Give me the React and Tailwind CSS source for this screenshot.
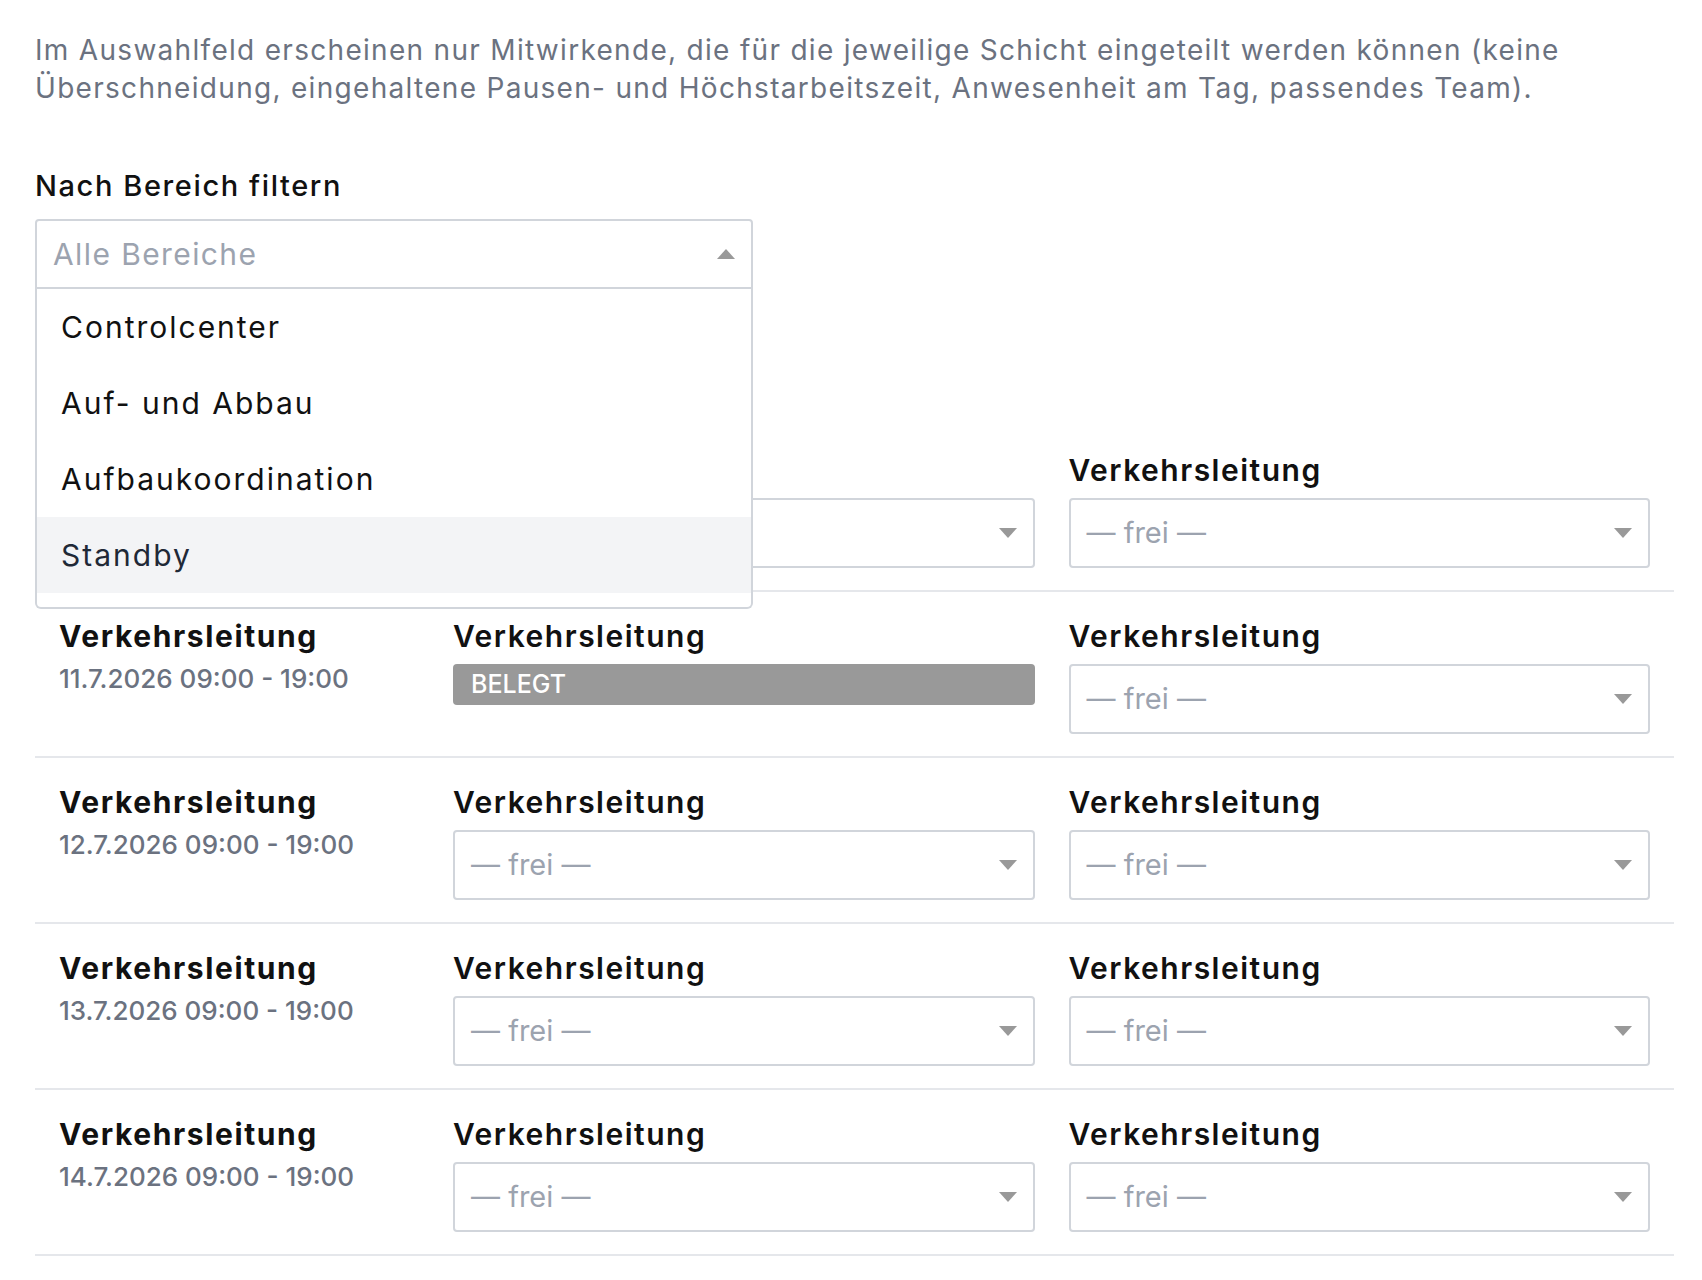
import React from "react";

const rows = [
  { date: "10.7.2026 09:00 - 19:00", a: "frei", b: "frei" },
  { date: "11.7.2026 09:00 - 19:00", a: "belegt", b: "frei" },
  { date: "12.7.2026 09:00 - 19:00", a: "frei", b: "frei" },
  { date: "13.7.2026 09:00 - 19:00", a: "frei", b: "frei" },
  { date: "14.7.2026 09:00 - 19:00", a: "frei", b: "frei" },
];

const options = ["Controlcenter", "Auf- und Abbau", "Aufbaukoordination", "Standby"];

function Caret({ up }) {
  return (
    <svg width="18" height="10" viewBox="0 0 18 10" className="shrink-0">
      <polygon points={up ? "9,0 18,10 0,10" : "0,0 18,0 9,10"} fill="#999999" />
    </svg>
  );
}

function Slot({ value }) {
  if (value === "belegt") {
    return (
      <div className="h-[41px] rounded-[4px] bg-[#999999] px-[18px] flex items-center text-white text-[25px] font-medium">
        BELEGT
      </div>
    );
  }
  return (
    <div className="h-[70px] rounded-[4px] border-2 border-[#d1d5db] bg-white px-4 flex items-center justify-between">
      <span className="text-[#9ca3af] text-[29px]">— frei —</span>
      <Caret />
    </div>
  );
}

export default function App() {
  return (
    <div className="min-h-screen bg-white pl-[35px] pr-[28px] pt-[31px] font-['Inter',sans-serif]">
      <p className="text-[#6b7280] text-[28px] leading-[38px] tracking-[1.3px]">
        Im Auswahlfeld erscheinen nur Mitwirkende, die für die jeweilige Schicht eingeteilt werden können (keine Überschneidung, eingehaltene Pausen- und Höchstarbeitszeit, Anwesenheit am Tag, passendes Team).
      </p>

      <div className="relative mt-[59px] w-[718px]">
        <div className="text-[#111111] text-[29px] leading-[40px] font-medium tracking-[1.6px] mb-[13px]">Nach Bereich filtern</div>
        <div className="h-[70px] rounded-t-[4px] border-2 border-[#d1d5db] bg-white pl-4 pr-[16px] flex items-center justify-between">
          <span className="text-[#9ca3af] text-[30px] tracking-[1.4px]">Alle Bereiche</span>
          <Caret up />
        </div>
        <div className="absolute left-0 right-0 top-full z-10 rounded-b-[6px] border-2 border-t-0 border-[#d1d5db] bg-white pb-[14px]">
          {options.map((o, i) => (
            <div
              key={o}
              className={"h-[76px] px-[24px] flex items-center text-[30px] tracking-[2px] " + (i === 3 ? "bg-[#f3f4f6] text-[#1f2937]" : "text-[#111111]")}
            >
              {o}
            </div>
          ))}
        </div>
      </div>

      <div className="mt-[137px]">
        {rows.map((r) => (
          <div key={r.date} className="grid grid-cols-[360px_1fr_1fr] gap-x-[34px] px-[24px] pt-[24px] pb-[22px] border-b-2 border-[#e5e7eb]">
            <div>
              <div className="text-[#111111] text-[30px] leading-[40px] font-bold tracking-[1.6px]">Verkehrsleitung</div>
              <div className="mt-[3px] text-[#6b7280] text-[26px] leading-[40px] font-medium">{r.date}</div>
            </div>
            <div>
              <div className="text-[#111111] text-[30px] leading-[40px] font-semibold tracking-[1.5px] mb-[8px]">Verkehrsleitung</div>
              <Slot value={r.a} />
            </div>
            <div>
              <div className="text-[#111111] text-[30px] leading-[40px] font-semibold tracking-[1.5px] mb-[8px]">Verkehrsleitung</div>
              <Slot value={r.b} />
            </div>
          </div>
        ))}
      </div>
    </div>
  );
}
